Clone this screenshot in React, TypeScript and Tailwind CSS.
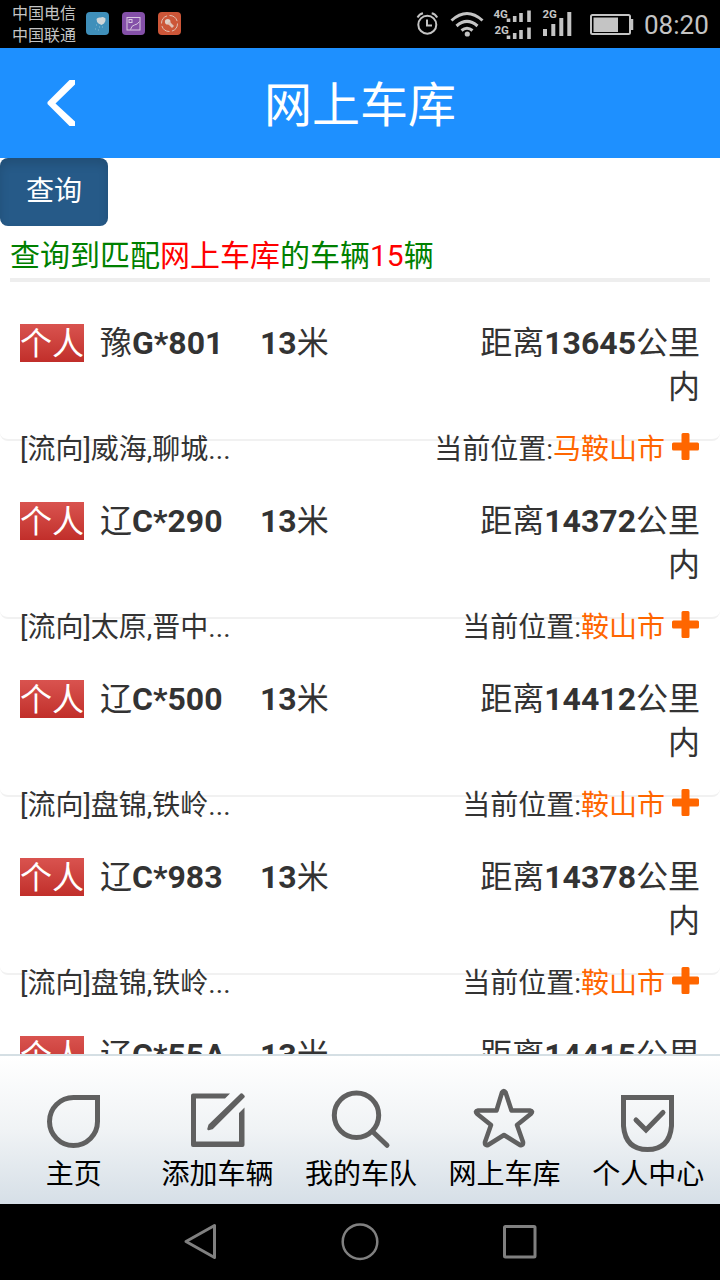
import type { ReactNode } from "react";

const vehicles = [
  { region: "豫", plate: "G*801", length: 13, distance: 13645, route: "威海,聊城...", city: "马鞍山市" },
  { region: "辽", plate: "C*290", length: 13, distance: 14372, route: "太原,晋中...", city: "鞍山市" },
  { region: "辽", plate: "C*500", length: 13, distance: 14412, route: "盘锦,铁岭...", city: "鞍山市" },
  { region: "辽", plate: "C*983", length: 13, distance: 14378, route: "盘锦,铁岭...", city: "鞍山市" },
  { region: "辽", plate: "C*55A", length: 13, distance: 14415, route: "盘锦,铁岭...", city: "鞍山市" },
];

function StatusBar() {
  return (
    <div className="flex h-12 shrink-0 bg-black text-[#c4c4c4]">
      <div className="ml-3 mt-[3px] w-[64px] whitespace-nowrap text-[16px] leading-[21.5px]">
        <div>中国电信</div>
        <div>中国联通</div>
      </div>
      <div className="ml-[10px] mt-3 flex gap-[13px]">
        <svg className="h-[23px] w-[23px]" viewBox="0 0 23 23">
          <rect width="23" height="23" rx="4" fill="#3f8fba" />
          <path d="M10.500 7q1-2 4-1.500q3-1.500 5 1q.5 3-1.500 5l-2.500 1.500l-3-1.500q-2-1.500-2-4.500z" fill="#cfd6d8" />
          <path d="M10 13h1M13 15h1M9 17h1M16 15h1M12 18h1" stroke="#86bad2" />
        </svg>
        <svg className="h-[23px] w-[23px]" viewBox="0 0 23 23" fill="none" stroke="#d8c8e0" strokeWidth="1">
          <rect width="23" height="23" rx="4" fill="#8450a8" stroke="none" />
          <rect x="5" y="5.500" width="13" height="12.500" />
          <rect x="7" y="7.500" width="3" height="3" />
          <path d="M8.500 17.500q1-4 4-4.500t5-3.500" />
        </svg>
        <svg className="h-[23px] w-[23px]" viewBox="0 0 23 23" fill="none" stroke="#e0c0b4">
          <rect width="23" height="23" rx="4" fill="#cc5638" stroke="none" />
          <circle cx="11.500" cy="11.500" r="8" strokeDasharray="10 2.500" />
          <circle cx="9.700" cy="9.700" r="2.800" fill="#e0d0c8" stroke="none" />
          <path d="M10.500 10.500l4.500 4.500" strokeWidth="2.800" />
        </svg>
      </div>
      <div className="ml-auto mr-4 flex h-12 items-center">
        <svg className="h-12 w-[236px]" viewBox="412 0 236 48" fill="none" stroke="#c4c4c4">
          <circle cx="427.300" cy="24.700" r="9" strokeWidth="2" />
          <path d="M427 19.500v6h5M417.500 17.500q2-3.500 5.500-4.200M437.200 17.500q-2-3.500-5.500-4.200" strokeWidth="2" />
          <path d="M451.500 20.500Q467 6.500 482.500 20.500M456.500 26Q467 16.800 477.500 26M461.500 30.500Q467 26 472.500 30.500" strokeWidth="3" />
          <circle cx="467.300" cy="34" r="2.600" fill="#c4c4c4" stroke="none" />
          <g fill="#c4c4c4" stroke="none">
            <text x="493.500" y="17.500" fontSize="11.500" className="font-bold">4G</text>
            <text x="494.500" y="34" fontSize="11.500" className="font-bold">2G</text>
            <text x="542.500" y="17.500" fontSize="11.500" className="font-bold">2G</text>
          </g>
          <path d="M508.500 22v-3.500M514.700 22v-6M521 22v-9M529 22v-11.500M508.500 39v-3.500M514.700 39v-6M521 39v-9M529 39v-11.500" strokeWidth="3.600" />
          <path d="M545 36v-7M553.300 36v-12M561.300 36v-18M569.300 36v-24" strokeWidth="4" />
          <rect x="591" y="15" width="39" height="19" rx="1.500" strokeWidth="2" />
          <rect x="593.500" y="17.500" width="24.500" height="14.500" fill="#c4c4c4" stroke="none" />
          <path d="M632 19v11" strokeWidth="2.500" />
        </svg>
        <span className="-ml-[4px] w-[60px] whitespace-nowrap pt-[1px] text-[26px] leading-none">08:20</span>
      </div>
    </div>
  );
}

function Header() {
  return (
    <div className="grid h-[110px] shrink-0 grid-cols-[100px_1fr_100px] items-center bg-[#1e90ff] text-white">
      <svg className="ml-[46px] h-[48px] w-[32px]" viewBox="0 0 32 48">
        <path d="M23.500 1H29v4.500L9.500 24.500L29 42.500V47h-5.500L1.500 25v-2z" fill="#fff" />
      </svg>
      <h1 className="pt-[5px] text-center text-[48px] leading-none">网上车库</h1>
    </div>
  );
}

function VehicleRow({ vehicle }: { vehicle: (typeof vehicles)[number] }) {
  return (
    <div className="h-[178px] shrink-0 text-[#333]">
      <div className="flex h-[138px] rounded-b-[8px] border-b-2 border-[#f1f1f1] px-5 pt-[18px] text-[32px] leading-[44px]">
        <span className="mt-[3px] h-[38px] w-16 bg-linear-to-b from-[#d9534f] to-[#c12e2a] leading-[40px] text-white">个人</span>
        <span className="ml-4 w-[160px]">
          {vehicle.region}
          <b>{vehicle.plate}</b>
        </span>
        <span>
          <b>{vehicle.length}</b>米
        </span>
        <span className="ml-auto w-[230px] text-right">
          距离<b>{vehicle.distance}</b>公里内
        </span>
      </div>
      {/* Second line sits across the card's bottom border */}
      <div className="relative -mt-[11px] flex h-[38px] justify-between px-5 text-[28px] leading-10">
        <span>[流向]{vehicle.route}</span>
        <span className="flex">
          当前位置:<span className="text-[#ff6600]">{vehicle.city}</span>
          <svg className="-mr-px ml-[7px] mt-[3px] h-[28px] w-[29px]" viewBox="0 0 29 28">
            <path d="M11 0h5q1.500 0 1.500 1.500V9.500h8q1.500 0 1.500 1.500v5q0 1.500-1.500 1.500h-8v8q0 1.500-1.500 1.500h-5q-1.500 0-1.500-1.500v-8H1.500q-1.500 0-1.500-1.500v-5q0-1.500 1.500-1.500h8V1.500Q9.500 0 11 0z" fill="#ff6600" />
          </svg>
        </span>
      </div>
    </div>
  );
}

function NavItem({ label, children }: { label: string; children: ReactNode }) {
  return (
    <div className="flex flex-1 flex-col items-center">
      <svg
        className="mt-8 h-16 w-16"
        viewBox="0 0 64 64"
        fill="none"
        stroke="#606060"
        strokeWidth="5"
      >
        {children}
      </svg>
      <span className="mt-[3px] whitespace-nowrap text-[28px] leading-[40px] text-black">{label}</span>
    </div>
  );
}

function BottomNav() {
  return (
    <div className="flex h-[150px] shrink-0 border-t-2 border-[#d5dfe4] bg-linear-to-b from-white via-[#f0f3f5] to-[#d6dfe7] pl-[2px]">
      <NavItem label="主页">
        <path d="M31.500 9.500H55.500V33.500A24 24 0 1 1 31.500 9.500z" />
      </NavItem>
      <NavItem label="添加车辆">
        <path d="M45 5.500L40 10.500H11V53.500H54V25L59.500 19.500V57q0 2-2 2H8q-2 0-2-2V7.500q0-2 2-2z" fill="#606060" stroke="none" />
        <path d="M56.500 6.500l2 2L27 40l-3.500 1l1-3.500z" fill="#606060" stroke="#606060" strokeWidth="2.500" strokeLinejoin="round" />
      </NavItem>
      <NavItem label="我的车队">
        <circle cx="27.500" cy="27.300" r="22.200" />
        <path d="M43.500 43.500l14.500 13.800" strokeLinecap="round" />
      </NavItem>
      <NavItem label="网上车库">
        <path
          d="M29 4.500q1.800-3 3.600 0L38.500 22.500H57q3.500.5 1 3.200L44 37L50 54q.5 4-3 3L31 47L15 57q-3.500 1-3-3L18 37L4 25.700q-2.500-2.700 1-3.200H23.500z"
          strokeWidth="4.500"
          strokeLinejoin="round"
        />
      </NavItem>
      <NavItem label="个人中心">
        <path d="M7.500 9.500H55.500V38q-2 23.500-24 23.500T7.500 38z" />
        <path d="M20 32L30 42L47 24.500" strokeLinecap="round" />
      </NavItem>
    </div>
  );
}

function SystemNav() {
  return (
    <div className="flex h-[76px] shrink-0 items-center justify-center gap-[120px] bg-black">
      <svg className="h-10 w-10" viewBox="0 0 40 40" fill="none" stroke="#808080" strokeWidth="3" strokeLinejoin="round">
        <path d="M6 19.500L34.500 3.500V35.500z" />
      </svg>
      <svg className="h-10 w-10" viewBox="0 0 40 40" fill="none" stroke="#808080" strokeWidth="2.500">
        <circle cx="20" cy="19.700" r="17.300" />
      </svg>
      <svg className="h-10 w-10" viewBox="0 0 40 40" fill="none" stroke="#808080" strokeWidth="3">
        <rect x="4.500" y="4.500" width="30.500" height="30.500" rx="1" />
      </svg>
    </div>
  );
}

export default function App() {
  return (
    <div className="flex h-[1280px] w-[720px] flex-col overflow-hidden bg-white font-[Roboto,'Noto_Sans_CJK_SC',sans-serif]">
      <StatusBar />
      <Header />
      <main className="flex min-h-0 flex-1 flex-col overflow-hidden">
        <button className="h-[68px] w-[108px] shrink-0 rounded-[8px] bg-[#265a88] text-[28px] text-white shadow-[inset_0_6px_10px_rgba(0,0,0,0.125)]">
          查询
        </button>
        <div className="mx-[10px] h-14 shrink-0 border-b-4 border-[#eee] pt-[9px] text-[30px] leading-[42px] text-[#008000]">
          查询到匹配<span className="text-[#f00]">网上车库</span>的车辆<span className="text-[#f00]">15</span>辆
        </div>
        <div className="flex flex-col pt-[21px]">
          {vehicles.map((vehicle) => (
            <VehicleRow key={vehicle.plate} vehicle={vehicle} />
          ))}
        </div>
      </main>
      <BottomNav />
      <SystemNav />
    </div>
  );
}
